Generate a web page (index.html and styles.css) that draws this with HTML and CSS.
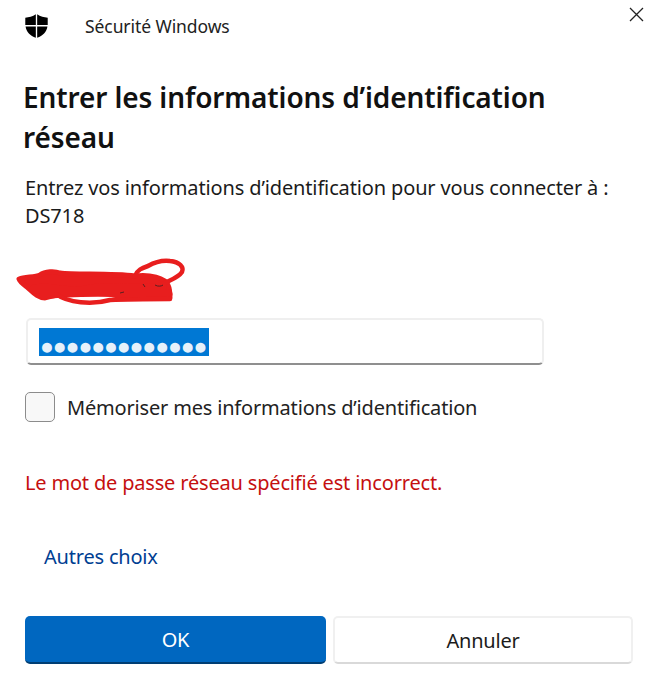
FILE: index.html
```html
<!DOCTYPE html>
<html lang="fr">
<head>
<meta charset="utf-8">
<title>Sécurité Windows</title>
<link rel="stylesheet" href="styles.css">
</head>
<body>
<main class="dialog">
  <header class="titlebar">
    <svg class="shield" viewBox="0 0 24 25" aria-hidden="true">
      <path d="M11.3 0.3 C8 2.5 4 3.6 0.3 3.8 V11.5 H11.3 Z M12.7 0.3 C16 2.5 20 3.6 23.7 3.8 V11.5 H12.7 Z M0.6 12.9 H11.3 V24.7 C5.5 22.5 1.4 18.5 0.6 12.9 Z M12.7 12.9 H23.4 C22.6 18.5 18.5 22.5 12.7 24.7 Z"/>
    </svg>
    <span class="app-name">Sécurité Windows</span>
  </header>
  <svg class="close" viewBox="0 0 15 15" aria-hidden="true"><path d="M1 1 L14 14 M14 1 L1 14"/></svg>
  <h1 class="title">Entrer les informations d’identification réseau</h1>
  <p class="intro">Entrez vos informations d’identification pour vous connecter à : DS718</p>
  <svg class="scribble" viewBox="0 0 180 50" aria-hidden="true">
    <path class="mass" d="M9 22 C15 20 25 20 30 18 C35 14 45 14 50 16 C65 18 100 16 125 19 C140 17 155 21 158 28 C160 32 160 36 160 41 C130 42 110 40 100 37 C80 34 50 36 35 41 C27 41 22 34 17 30 C13 27 10 25 9 22 Z"/>
    <path class="stroke-thick" d="M24 32 C40 28 60 38 80 32 C105 28 130 34 152 30 M34 38 C60 34 110 35 158 37"/>
    <path class="stroke-thin" d="M46 37 C58 46 82 48 100 43 C120 42 140 42 160 42 M125 19 C127 13 132 11 138 9 C145 5 152 3 160 4 C170 5 174 10 172 15 C168 21 160 23 153 27"/>
    <path class="nick" d="M133 27 L135 30 M145 28 C148 30 152 29 153 28 M110 36 L114 35"/>
  </svg>
  <div class="field"><span class="selection">●●●●●●●●●●●●●</span></div>
  <label class="remember"><span class="box"></span><span>Mémoriser mes informations d’identification</span></label>
  <p class="error">Le mot de passe réseau spécifié est incorrect.</p>
  <a class="more" href="#">Autres choix</a>
  <footer class="actions">
    <button class="btn primary" type="button">OK</button>
    <button class="btn secondary" type="button">Annuler</button>
  </footer>
</main>
</body>
</html>
```

FILE: styles.css
```css
* { box-sizing: border-box; }
html, body { margin: 0; background: #fff; }
body { width: 657px; height: 687px; overflow: hidden; font-family: "Noto Sans", "Open Sans", sans-serif; color: #1b1b1b; }
.dialog { position: relative; display: flex; flex-direction: column; height: 100%; padding: 14px 24px 0 25px; }
.titlebar { display: flex; align-items: center; gap: 37px; height: 24px; }
.shield { width: 23px; height: 24px; fill: #000; flex: none; }
.app-name { font-size: 17.5px; color: #222; letter-spacing: -0.08px; }
.close { position: absolute; top: 7px; left: 629px; width: 15px; height: 15px; fill: none; stroke: #222; stroke-width: 1.3; }
.title { margin: 39px 60px 0 -2px; font-size: 28px; line-height: 40px; font-weight: 600; color: #111; letter-spacing: -0.12px; }
.intro { margin: 17px 0 0 0; font-size: 20px; line-height: 28px; width: 600px; letter-spacing: -0.14px; }
.scribble { display: block; width: 180px; height: 50px; margin: 27px 0 0 -15px; }
.mass { fill: #e81e1e; stroke: #e81e1e; stroke-width: 5; stroke-linejoin: round; }
.stroke-thick { fill: none; stroke: #e81e1e; stroke-width: 9; stroke-linecap: round; }
.stroke-thin { fill: none; stroke: #e81e1e; stroke-width: 4.5; stroke-linecap: round; }
.nick { fill: none; stroke: #5a2020; stroke-width: 1; }
.field { margin: 11px 0 0 1px; width: 518px; height: 47px; padding-left: 11px; padding-top: 8px; background: #fff; border: 2px solid #efefef; border-bottom: 2px solid #8f8f8f; border-radius: 5px; }
.selection { display: block; width: 170px; height: 28px; background: #0078d4; color: #e6f1fa; font-size: 23px; line-height: 34px; letter-spacing: -1.1px; white-space: nowrap; padding-left: 1px; }
.remember { display: flex; align-items: center; gap: 12px; margin-top: 27px; font-size: 20px; letter-spacing: -0.18px; color: #222; }
.box { width: 30px; height: 30px; background: #f8f8f8; border: 1.5px solid #8c8c8c; border-radius: 5px; flex: none; }
.error { margin: 47px 0 0 0; font-size: 20px; line-height: 28px; color: #c50f0f; letter-spacing: -0.18px; }
.more { margin: 46px 0 0 19px; font-size: 20px; line-height: 28px; color: #003e92; text-decoration: none; letter-spacing: -0.2px; }
.actions { display: flex; gap: 7px; margin-top: 45px; }
.btn { width: 301px; height: 48px; font: inherit; font-size: 20px; border-radius: 5px; padding: 0; letter-spacing: -0.2px; }
.primary { background: #0067c0; color: #fff; border: 0; border-bottom: 2px solid #003e73; }
.secondary { width: 300px; background: #fff; color: #1b1b1b; border: 2px solid #f0f0f0; border-bottom: 2px solid #d9d9d9; }
```
